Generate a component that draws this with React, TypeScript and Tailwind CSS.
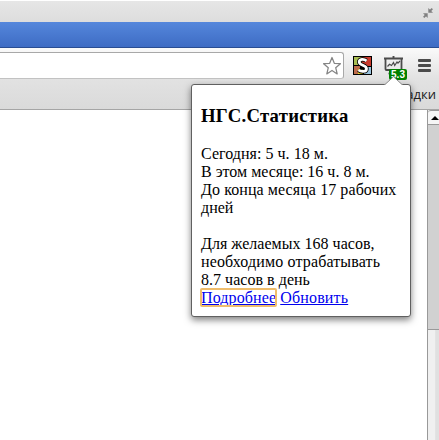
function RestoreIcon() {
  return (
    <svg width="10" height="10" viewBox="0 0 10 10" className="block" fill="#808080" stroke="#808080">
      <path d="M5.300 0v4.700H10z" stroke="none" />
      <path d="M6.500 3.500 9.300.7" strokeWidth="1.800" />
      <path d="M4.700 10V5.300H0z" stroke="none" />
      <path d="M3.500 6.500.7 9.300" strokeWidth="1.800" />
    </svg>
  );
}

function StarIcon() {
  return (
    <svg width="20" height="20" viewBox="0 0 20 20" className="block" fill="#fff" stroke="#858585" strokeWidth="1.25" strokeLinejoin="round">
      <path d="M10 1.500 12.300 7.300 18.400 7.700 13.700 11.700 15.200 17.900 10 14.500 4.800 17.900 6.300 11.700 1.600 7.700 7.700 7.300z" />
    </svg>
  );
}

function ColorTileIcon() {
  return (
    <svg width="19" height="19" viewBox="0 0 19 19" className="block">
      <path d="M0 0h19v19H0z" fill="#000" />
      <path d="M1 1h8v8H1z" fill="#a9bd52" />
      <path d="M9 1h9v9H9z" fill="#c93a2c" />
      <path d="M1 10h6v8H1z" fill="#bd6d4c" />
      <path d="M11 11h7v7h-7z" fill="#9bc5df" />
      <path d="M5 13h5v5H5z" fill="#f3dd22" />
      <path d="M13.500 4.800C11 2.800 6.200 2.700 6.200 6.100c0 3.600 7.300 2.800 7.300 6.600 0 3.500-5.500 3.300-8 1.300" fill="none" stroke="#000" strokeWidth="4.400" />
      <path d="M13.500 4.800C11 2.800 6.200 2.700 6.200 6.100c0 3.600 7.300 2.800 7.300 6.600 0 3.500-5.500 3.300-8 1.300" fill="none" stroke="#fff" strokeWidth="2.800" />
    </svg>
  );
}

function ChartIcon() {
  return (
    <svg width="20" height="20" viewBox="0 0 20 20" className="block" fill="none" stroke="#4b4b4b">
      <path d="M9.500 0v2M0 2.500h19" strokeWidth="1.900" />
      <path d="M1.500 3v10q0 1 1 1h14q1 0 1-1V3" strokeWidth="1.800" />
      <path d="M3.500 10.500 5.500 8.300l2 1.200L9.500 6.500l1.200 3L13 6l1 1.200L16 5" strokeWidth="1.200" />
      <path d="M4.500 17.500h5" strokeWidth="1.700" />
    </svg>
  );
}

function Toolbar() {
  return (
    <div className="flex h-[32px] items-start">
      <div className="mt-[4px] flex h-[27px] w-[344px] items-center justify-end rounded-r-[3px] border border-l-0 border-[#a8a8a8] border-b-[#c2c2c2] bg-white pr-[1px]">
        <StarIcon />
      </div>
      <div className="ml-[9px] mt-[8px]"><ColorTileIcon /></div>
      <div className="relative ml-[12px] mt-[8px]">
        <ChartIcon />
        <span className="absolute left-[5px] top-[13px] h-[11px] w-[18px] rounded-[2px] bg-[#008000] text-center font-['Liberation_Sans'] text-[10px] leading-[11px] font-bold text-white">5.3</span>
      </div>
      <div className="ml-[14px] mt-[11px] flex flex-col gap-[2px]">
        <i className="h-[3px] w-[13px] rounded-[1px] bg-[#4b4b4b]" />
        <i className="h-[3px] w-[13px] rounded-[1px] bg-[#4b4b4b]" />
        <i className="h-[3px] w-[13px] rounded-[1px] bg-[#4b4b4b]" />
      </div>
    </div>
  );
}

function Popup() {
  return (
    <div className="absolute left-[191px] top-[84px] h-[233px] w-[220px] rounded-[3px] border border-[#606060] bg-white pl-[9px] pr-[9px] font-['Liberation_Serif',serif] text-[16px] leading-[18px] text-black shadow-[0_3px_7px_rgba(0,0,0,0.5)]">
      <svg width="19" height="10" viewBox="0 0 19 10" className="absolute left-[192px] top-[-9px]">
        <path d="M0 9 1 8.500 9.500.7 18 8.500 19 9v1H0z" fill="#fff" />
        <path d="M0 8.500h1L9.500.7l8.500 7.800h1" fill="none" stroke="#808080" strokeWidth=".9" />
      </svg>
      <h3 className="mt-[20px] text-[18.72px] leading-[21px] font-bold tracking-[0.26px]">НГС.Статистика</h3>
      <p className="mt-[19px] whitespace-nowrap">
        <span className="tracking-[0.03px]">Сегодня: 5 ч. 18 м.</span><br />
        В этом месяце: 16 ч. 8 м.<br />
        <span className="tracking-[0.08px]">До конца месяца 17 рабочих</span><br />
        дней
      </p>
      <p className="mt-[18px] whitespace-nowrap">
        <span className="tracking-[0.02px]">Для желаемых 168 часов,</span><br />
        <span className="tracking-[0.14px]">необходимо отрабатывать</span><br />
        <span className="tracking-[0.03px]">8.7 часов в день</span><br />
        <a href="#details" className="rounded-[1px] tracking-[0.12px] text-[#0000ee] underline outline-2 -outline-offset-1 outline-[#efbd6c]">Подробнее</a>{" "}
        <a href="#refresh" className="tracking-[0.16px] text-[#0000ee] underline">Обновить</a>
      </p>
    </div>
  );
}

export default function App() {
  return (
    <div className="relative flex h-[440px] w-[439px] flex-col overflow-hidden bg-white">
      <div className="flex h-[22px] items-start justify-end border-t border-white bg-linear-to-b from-[#e6e6e6] to-[#dddddd] pr-[6px] pt-[7px]">
        <RestoreIcon />
      </div>
      <div className="h-[26px] border-b border-[#294d92] bg-linear-to-b from-[#5587dc] to-[#3e6cc4]" />
      <div className="h-[62px] border-b border-[#a5a5a5] bg-linear-to-b from-[#fafafa] via-[#e2e2e2] to-[#dadada]">
        <Toolbar />
        <div className="flex h-[29px] items-center justify-end pr-[3px] font-['Open_Sans',sans-serif] text-[13px] font-medium text-[#202020]">адки</div>
      </div>
      <div className="flex flex-1 justify-end">
        <div className="flex w-[12px] flex-col border-l border-[#999999] bg-linear-to-r from-[#f0f0f0] from-60% to-[#e0e0e0] to-70%">
          <div className="flex h-[15px] items-center justify-center rounded-tl-[3px] border-t border-b border-[#999999] bg-[#f5f5f5] pl-[2px]">
            <svg width="8" height="4" viewBox="0 0 8 4"><path d="M4 0 8 4H0z" fill="#000" /></svg>
          </div>
          <div className="h-[205px] border-b border-[#999999] bg-[#d1d1d1]" />
        </div>
      </div>
      <Popup />
    </div>
  );
}
